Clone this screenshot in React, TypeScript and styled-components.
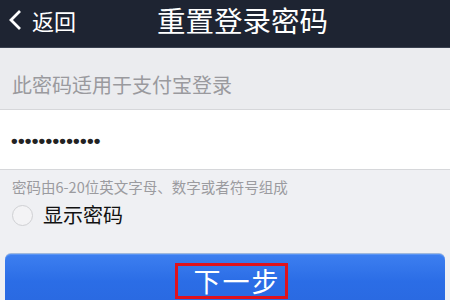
import React from "react";
import styled, { createGlobalStyle } from "styled-components";

const Global = createGlobalStyle`
  html, body { margin: 0; padding: 0; }
  body {
    width: 450px; height: 300px; overflow: hidden;
    background: #efeff3;
    font-family: "Noto Sans CJK SC", "Noto Sans", sans-serif;
  }
`;

const Page = styled.div`
  width: 450px;
  height: 300px;
  display: flex;
  flex-direction: column;
  background: #eff0f3;
`;

const Header = styled.header`
  height: 48px;
  flex: none;
  background: #1e2432;
  display: flex;
  align-items: center;
  padding: 0 0 8px 8px;
  gap: 81px;
  color: #fff;
  border-bottom: 1px solid #3a4150;
  box-sizing: border-box;
`;

const Back = styled.div`
  display: flex;
  align-items: center;
  gap: 9px;
  font-size: 22px;
  line-height: 30px;
`;

const Title = styled.h1`
  margin: 0;
  font-size: 28.5px;
  font-weight: 400;
  line-height: 36px;
`;

const Notice = styled.div`
  height: 62px;
  flex: none;
  display: flex;
  align-items: center;
  padding: 12px 12px 0;
  font-size: 20px;
  color: #9a9a9e;
  background: #ebecef;
  border-bottom: 1px solid #d6d7da;
  box-sizing: border-box;
`;

const InputRow = styled.div`
  height: 60px;
  flex: none;
  background: #fff;
  display: flex;
  align-items: center;
  padding: 2px 11px 0;
  border-bottom: 1px solid #d6d7da;
  box-sizing: border-box;
`;

const Dots = styled.span`
  font-family: "Liberation Sans", sans-serif;
  font-size: 19px;
  letter-spacing: 0.25px;
  color: #222;
  font-weight: bold;
`;

const Hint = styled.div`
  padding: 7px 12px 0;
  font-size: 14.5px;
  line-height: 20px;
  color: #9b9b9f;
`;

const ToggleRow = styled.label`
  display: flex;
  align-items: center;
  gap: 10px;
  padding: 3px 12px 0;
  font-size: 20px;
  line-height: 30px;
  color: #111;
`;

const Radio = styled.span`
  width: 19px;
  height: 19px;
  border-radius: 50%;
  border: 1px solid #cfd0d3;
  background: #f3f3f5;
  flex: none;
`;

const ButtonWrap = styled.div`
  padding: 24px 5px 0;
  flex: 1;
  display: flex;
`;

const Button = styled.button`
  flex: 1;
  border: none;
  border-radius: 6px 6px 0 0;
  background: linear-gradient(#3d7ff0, #2b6de6 60%, #2a6ae2);
  box-shadow: inset 0 1px 0 #5a94f4, 0 -1px 0 #9fb8dc;
  display: flex;
  justify-content: center;
  align-items: flex-start;
  padding: 9px 0 0 0;
  margin: 0;
`;

const Highlight = styled.span`
  border: 3px solid #e0121c;
  height: 30px;
  width: 95px;
  padding-left: 12px;
  box-sizing: content-box;
  display: flex;
  align-items: center;
  justify-content: center;
  color: #fff;
  font-size: 27px;
  line-height: 30px;
  font-family: "Noto Sans CJK SC", sans-serif;
  letter-spacing: 2px;
  margin-left: 12px;
`;

export default function App() {
  return (
    <>
      <Global />
      <Page>
        <Header>
          <Back>
            <svg width="15" height="22" viewBox="0 0 15 22">
              <path d="M12 2 L3 11 L12 20" fill="none" stroke="#fff" strokeWidth="2.8" />
            </svg>
            <span>返回</span>
          </Back>
          <Title>重置登录密码</Title>
        </Header>
        <Notice>此密码适用于支付宝登录</Notice>
        <InputRow>
          <Dots>•••••••••••••</Dots>
        </InputRow>
        <Hint>密码由6-20位英文字母、数字或者符号组成</Hint>
        <ToggleRow>
          <Radio />
          <span>显示密码</span>
        </ToggleRow>
        <ButtonWrap>
          <Button>
            <Highlight>下一步</Highlight>
          </Button>
        </ButtonWrap>
      </Page>
    </>
  );
}
